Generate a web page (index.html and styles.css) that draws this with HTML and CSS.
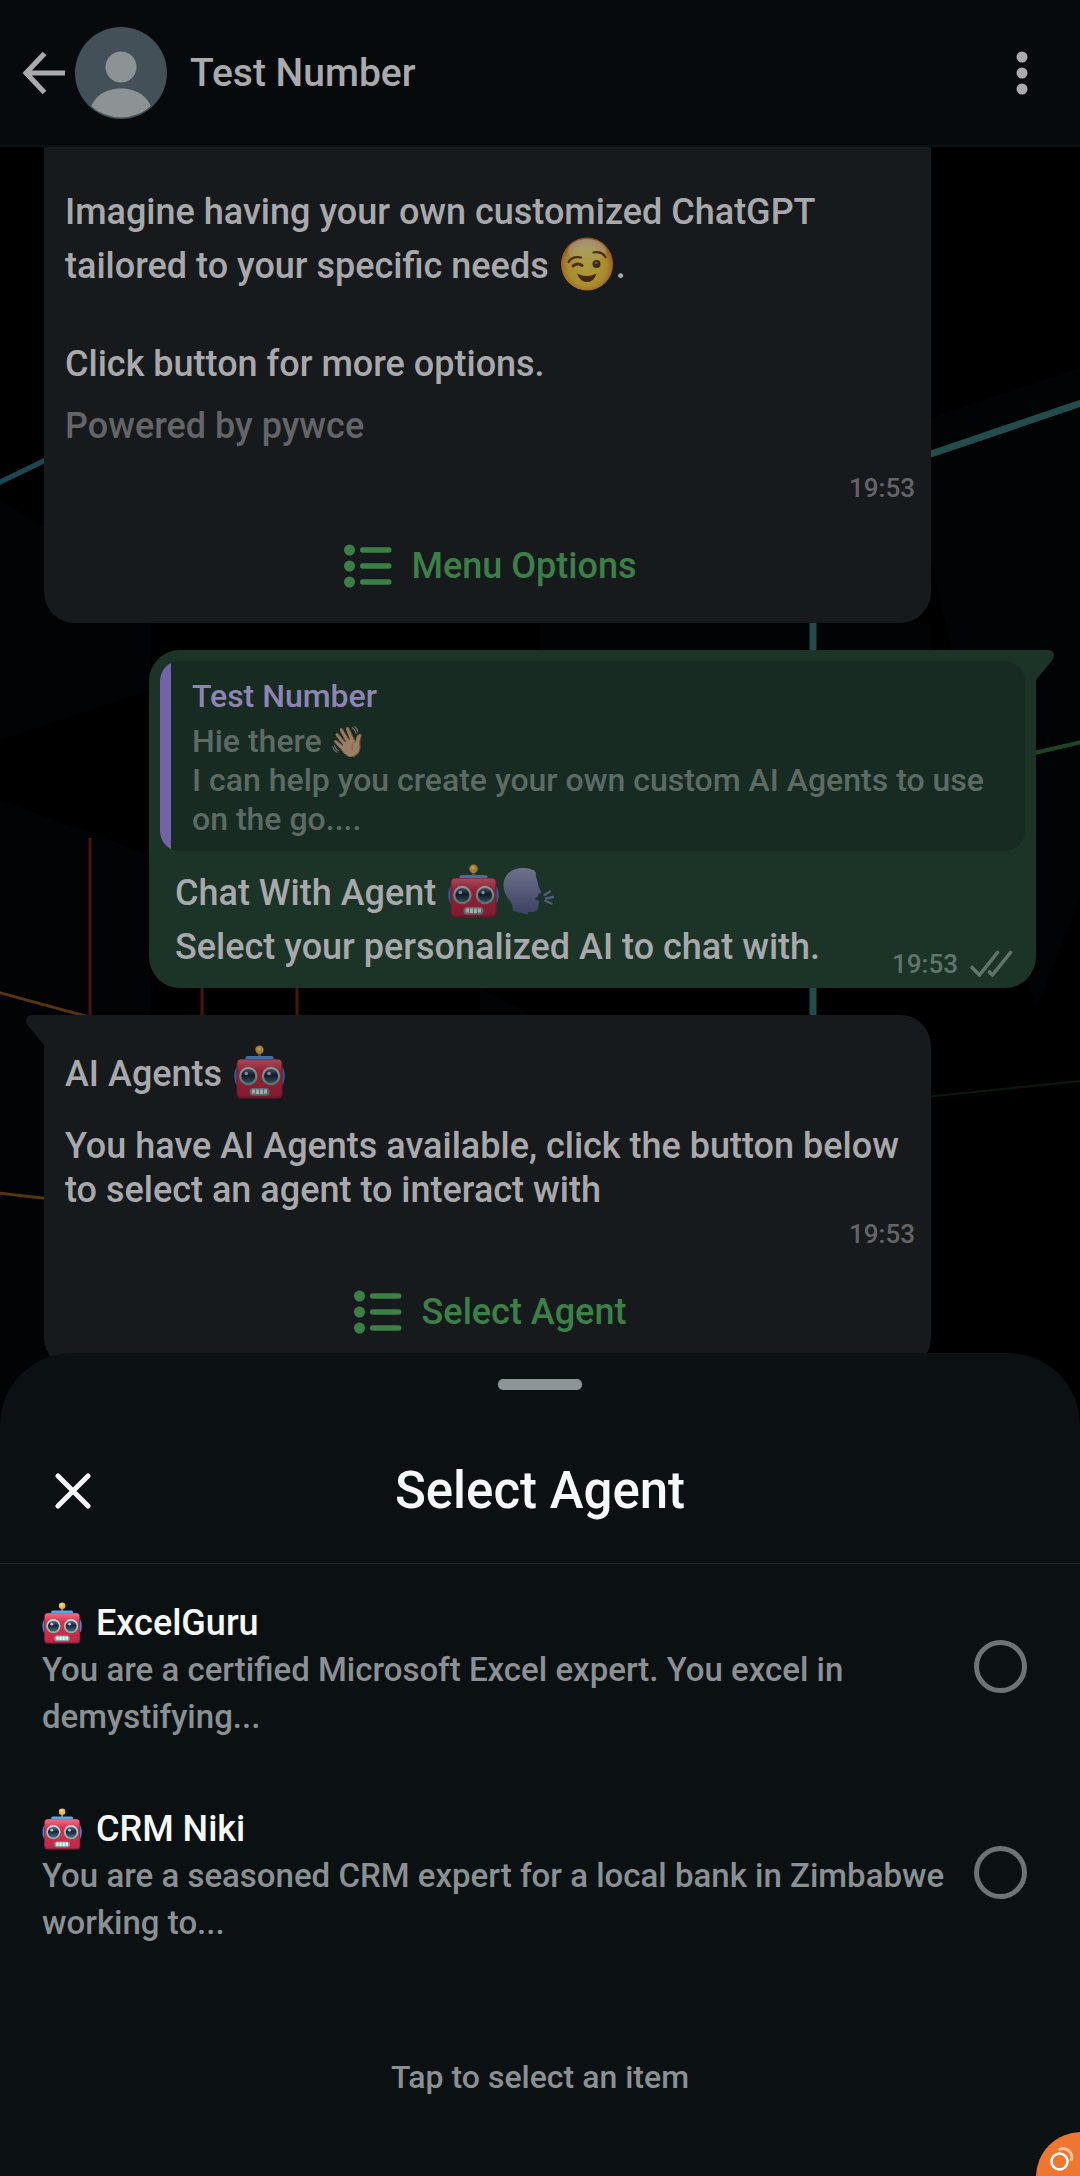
FILE: index.html
```html
<!DOCTYPE html>
<html lang="en">
<head>
<meta charset="utf-8">
<meta name="viewport" content="width=device-width, initial-scale=1">
<title>Test Number</title>
<link rel="stylesheet" href="styles.css">
</head>
<body>
<svg class="sprites" aria-hidden="true">
  <defs>
    <linearGradient id="robot-face" x1="0" y1="0" x2="0" y2="1">
      <stop offset="0" stop-color="#ee6f86"/><stop offset=".3" stop-color="#d9334f"/><stop offset="1" stop-color="#c02746"/>
    </linearGradient>
    <linearGradient id="robot-lens" x1="0" y1="0" x2="0" y2="1">
      <stop offset="0" stop-color="#5b7290"/><stop offset=".45" stop-color="#182638"/><stop offset="1" stop-color="#4b6b80"/>
    </linearGradient>
    <linearGradient id="robot-rim" x1="0" y1="0" x2="0" y2="1">
      <stop offset="0" stop-color="#d5dedd"/><stop offset="1" stop-color="#6fb0a6"/>
    </linearGradient>
    <radialGradient id="wink-skin" cx=".5" cy=".55" r=".52">
      <stop offset="0" stop-color="#ffe552"/><stop offset=".7" stop-color="#f8cf45"/><stop offset=".92" stop-color="#eb9d38"/><stop offset="1" stop-color="#d17a27"/>
    </radialGradient>
    <linearGradient id="wink-shine" x1="0" y1="0" x2="0" y2="1">
      <stop offset="0" stop-color="#fff" stop-opacity=".6"/><stop offset="1" stop-color="#fff" stop-opacity="0.1"/>
    </linearGradient>
    <linearGradient id="head-tone" x1="0" y1="0" x2="0" y2="1">
      <stop offset="0" stop-color="#a1a8c8"/><stop offset="1" stop-color="#565d94"/>
    </linearGradient>
    <filter id="glow" x="-20%" y="-20%" width="140%" height="140%" filterUnits="userSpaceOnUse"><feGaussianBlur stdDeviation="2"/></filter>
  </defs>
  <symbol id="robot" viewBox="0 0 52 54">
    <ellipse cx="3.5" cy="31" rx="3.2" ry="9" fill="#4a86e0"/>
    <ellipse cx="47.5" cy="31" rx="3.2" ry="9" fill="#4a86e0"/>
    <path d="M24.3 7h2.4v6h-2.4z" fill="#b1743a"/>
    <circle cx="25.5" cy="4.8" r="4.2" fill="#f0b93c"/>
    <circle cx="25" cy="3.8" r="1.8" fill="#ffe494"/>
    <rect x="11.500" y="11" width="28" height="5" rx="2" fill="#5aa7e8"/>
    <rect x="2.500" y="14" width="46" height="39.500" rx="4.500" fill="#a01f3c"/>
    <rect x="3.500" y="14.500" width="44" height="37" rx="4" fill="url(#robot-face)"/>
    <g>
      <circle cx="14.300" cy="31" r="9.200" fill="url(#robot-rim)"/>
      <circle cx="14.300" cy="31" r="7" fill="url(#robot-lens)"/>
      <circle cx="12.300" cy="28.500" r="1.800" fill="#b9cbe0"/>
      <circle cx="37" cy="31" r="9.200" fill="url(#robot-rim)"/>
      <circle cx="37" cy="31" r="7" fill="url(#robot-lens)"/>
      <circle cx="35" cy="28.500" r="1.800" fill="#b9cbe0"/>
    </g>
    <rect x="15.500" y="43" width="20" height="7.500" rx="3.500" fill="#7fa3a5"/>
    <path d="M18 44.500h3v4h-3zM22 44.500h3v4.500h-3zM26 44.500h3v4.500h-3zM30 44.500h3v4h-3z" fill="#f5f5f0"/>
  </symbol>
  <symbol id="list" viewBox="0 0 48 44">
    <circle cx="5.500" cy="6" r="5.500"/><circle cx="5.500" cy="22" r="5.500"/><circle cx="5.500" cy="38" r="5.500"/>
    <rect x="16" y="3.300" width="31.500" height="5.400" rx="2.700"/><rect x="16" y="19.300" width="31.500" height="5.400" rx="2.700"/><rect x="16" y="35.300" width="31.500" height="5.400" rx="2.700"/>
  </symbol>
</svg>

<div class="screen">
  <svg class="wallpaper" viewBox="0 0 1080 2176" preserveAspectRatio="xMidYMin slice" aria-hidden="true">
    <path d="M931 418L1080 368V900L1036 1010L931 560ZM0 500L150 590V690L0 740ZM0 800L150 855V1400H0Z" fill="#010305"/>
    <path d="M540 624H931V650H540ZM480 988L530 1015H480Z" fill="#010305"/>
    <g fill="none" stroke-width="9" filter="url(#glow)" opacity=".6">
      <path d="M-10 491L60 455" stroke="#0d3052"/>
      <path d="M925 456L1090 400M813 610V1020" stroke="#1b4746"/>
      <path d="M1030 754L1090 740" stroke="#123414" stroke-width="7"/>
      <path d="M90 838V1020M202 980V1020M297 980V1020" stroke="#3a0d06" stroke-width="6"/>
      <path d="M-10 990L100 1020M-10 1192L60 1200" stroke="#4a2a0a" stroke-width="7"/>
    </g>
    <g fill="none" stroke-width="5">
      <path d="M-10 487L60 453" stroke="#1c4752"/>
      <path d="M925 456L1090 400M813 610V1020" stroke="#234d4c" stroke-width="7"/>
      <path d="M1030 754L1090 740" stroke="#1f4325" stroke-width="4"/>
      <path d="M90 838V1020M202 980V1020M297 980V1020" stroke="#4a150c" stroke-width="3"/>
      <path d="M-10 990L100 1020M-10 1192L60 1200" stroke="#57350f" stroke-width="3"/>
      <path d="M925 1097L1090 1080" stroke="#081a0e" stroke-width="2"/>
    </g>
  </svg>

  <header class="topbar">
    <button class="icon-button" type="button" aria-label="Back">
      <svg width="42" height="44" viewBox="0 0 42 44"><path d="M21.500 2.500L3 22L21.500 41.500M3 22H42" fill="none" stroke="#aaaaac" stroke-width="5.200"/></svg>
    </button>
    <svg class="avatar" viewBox="0 0 92 92" role="img" aria-label="Contact photo">
      <clipPath id="avatar-clip"><circle cx="46" cy="46" r="44.500"/></clipPath>
      <circle cx="46" cy="46" r="46" fill="#445058"/>
      <circle cx="46" cy="40" r="15.500" fill="#8d9295"/>
      <path d="M14 92C14 72 28 61.500 46 61.500S78 72 78 92Z" fill="#8d9295" clip-path="url(#avatar-clip)"/>
    </svg>
    <h1 class="contact">Test Number</h1>
    <button class="icon-button" type="button" aria-label="More options">
      <svg width="12" height="44" viewBox="0 0 12 44" fill="#aaaaac"><circle cx="6" cy="6" r="5.500"/><circle cx="6" cy="22" r="5.500"/><circle cx="6" cy="38" r="5.500"/></svg>
    </button>
  </header>

  <main class="chat">
    <article class="bubble bubble-cut">
      <p class="text text-loose">Imagine having your own customized ChatGPT tailored to your specific needs <svg class="emoji dim" viewBox="0 0 52 54" role="img" aria-label="Winking face">
        <ellipse cx="26" cy="27" rx="26" ry="26.500" fill="url(#wink-skin)"/>
        <ellipse cx="26" cy="14" rx="19" ry="12" fill="url(#wink-shine)"/>
        <g fill="none" stroke="#6d4413" stroke-width="2.200" stroke-linecap="round">
          <path d="M7.500 25C10 21 15 19.500 20 20.500M32.500 15.500C38 14.500 42 16 44.500 20"/>
          <path d="M12 29C14.500 26.500 18.500 26.500 21 28.500" stroke-width="3"/>
        </g>
        <circle cx="35.500" cy="27" r="4" fill="#5a3a14"/><circle cx="35.200" cy="25.800" r="1.400" fill="#b58c3c"/>
        <path d="M16 36.500Q26 41.500 35.500 36.500Q33 45 26 45Q19 45 16 36.500Z" fill="#5c3b10"/>
      </svg>.</p>
      <p class="text after-blank">Click button for more options.</p>
      <p class="text footer-note">Powered by pywce</p>
      <time class="time" datetime="19:53">19:53</time>
      <button class="list-button" type="button"><svg class="list-icon"><use href="#list"/></svg>Menu Options</button>
    </article>

    <article class="bubble bubble-out">
      <svg class="tail tail-right" viewBox="0 0 19 30" aria-hidden="true"><path d="M0 0H14Q19 1 19 5.500Q19 8 17 10.500L1 30H0Z" fill="#1c3328"/></svg>
      <blockquote class="quote">
        <p class="quote-name">Test Number</p>
        <p class="quote-text">Hie there <span class="wave dim">👋🏼</span><br>I can help you create your own custom AI Agents to use on the go....</p>
      </blockquote>
      <div class="reply">
        <p class="text text-loose">Chat With Agent <svg class="emoji dim" role="img" aria-label="Robot"><use href="#robot"/></svg><svg class="emoji emoji-head dim" viewBox="0 0 52 48" role="img" aria-label="Speaking head">
          <path d="M19 0C27 0 32 2 33 5C32 8 34 11 35 15C35 18 36 20 38 23.500C38.500 25 37 25.500 35 26.500C36 29 32 30 31.500 31C33 32 36 32 36 34C35 37 36 41 33 43C30 45 27 43 25 44.500V47L9.500 42.500C11 38 8 34 4 29C-3 18 0 1 19 0Z" fill="url(#head-tone)"/>
          <path d="M41.500 27L47 23.500M43 30.500L50 29M42.500 33L48.500 35.500" fill="none" stroke="#7b83b4" stroke-width="2.400" stroke-linecap="round"/>
        </svg><br>Select your personalized AI to chat with.</p>
        <p class="meta"><time class="time" datetime="19:53">19:53</time><svg width="43" height="28" viewBox="0 0 43 28" role="img" aria-label="Delivered"><path d="M2 17.500L9.500 25L27.500 2.500M19.500 22L22.500 25L40.500 2.500" fill="none" stroke="#63756b" stroke-width="3.600" stroke-linecap="round" stroke-linejoin="round"/></svg></p>
      </div>
    </article>

    <article class="bubble bubble-in">
      <svg class="tail tail-left" viewBox="0 0 19 30" aria-hidden="true"><path d="M19 0H5Q0 1 0 5.500Q0 8 2 10.500L18 30H19Z" fill="#171a1d"/></svg>
      <p class="text text-loose">AI Agents <svg class="emoji dim" role="img" aria-label="Robot"><use href="#robot"/></svg></p>
      <p class="text after-title">You have AI Agents available, click the button below to select an agent to interact with</p>
      <time class="time time-close" datetime="19:53">19:53</time>
      <button class="list-button" type="button"><svg class="list-icon"><use href="#list"/></svg>Select Agent</button>
    </article>
  </main>

  <section class="sheet" role="dialog" aria-labelledby="sheet-title">
    <div class="handle"></div>
    <div class="sheet-head">
      <button class="icon-button" type="button" aria-label="Close">
        <svg width="36" height="36" viewBox="0 0 36 36"><path d="M3 3L33 33M33 3L3 33" stroke="#f7f8fa" stroke-width="5" stroke-linecap="round"/></svg>
      </button>
      <h2 class="sheet-title" id="sheet-title">Select Agent</h2>
    </div>
    <div class="options">
      <label class="option">
        <span class="option-body">
          <span class="option-name"><svg class="option-emoji" role="img" aria-label="Robot"><use href="#robot"/></svg>ExcelGuru</span>
          <span class="option-text">You are a certified Microsoft Excel expert. You excel in demystifying...</span>
        </span>
        <input class="radio" type="radio" name="agent">
      </label>
      <label class="option">
        <span class="option-body">
          <span class="option-name"><svg class="option-emoji" role="img" aria-label="Robot"><use href="#robot"/></svg>CRM Niki</span>
          <span class="option-text">You are a seasoned CRM expert for a local bank in Zimbabwe working to...</span>
        </span>
        <input class="radio" type="radio" name="agent">
      </label>
    </div>
    <p class="hint">Tap to select an item</p>
  </section>

  <button class="fab" type="button" aria-label="Capture">
    <svg width="90" height="90" viewBox="0 0 90 90" fill="none"><path d="M22.500 18A8.700 8.700 0 0 1 35 29" stroke="#f9c49a" stroke-width="3"/><circle cx="23.500" cy="29.500" r="8" stroke="#fff" stroke-width="2.600"/></svg>
  </button>
</div>
</body>
</html>
```
FILE: styles.css
```css
* { box-sizing: border-box; }

body {
  margin: 0;
  background: #000;
  font-family: Roboto, "Noto Sans", sans-serif;
  font-weight: 500;
  font-size: 36px;
  line-height: 44px;
}

p, h1, h2, blockquote { margin: 0; font-weight: 500; }

button {
  margin: 0;
  padding: 0;
  border: 0;
  background: none;
  font: inherit;
  color: inherit;
  cursor: pointer;
}

.sprites { position: absolute; width: 0; height: 0; }

.screen {
  position: relative;
  display: flex;
  flex-direction: column;
  min-height: 100vh;
  overflow: hidden;
}

.wallpaper {
  position: absolute;
  inset: 0;
  width: 100%;
  height: 100%;
}

/* Top bar */
.topbar {
  position: relative;
  display: flex;
  align-items: center;
  height: 147px;
  padding: 0 52px 0 23px;
  background: #060a0d;
  border-bottom: 2px solid #0d1113;
}

.icon-button { display: flex; }
.icon-button svg { display: block; }
.avatar { width: 92px; height: 92px; margin-left: 10px; }

.contact {
  flex: 1;
  margin-left: 23px;
  font-size: 39px;
  color: #aaaaac;
}

/* Messages */
.chat {
  position: relative;
  display: flex;
  flex-direction: column;
  gap: 27px;
  padding: 0 44px;
}

.bubble {
  position: relative;
  display: flex;
  flex-direction: column;
  width: calc(100% - 105px);
  padding: 32px 16px 35px 21px;
  border-radius: 31px;
  background: #171a1d;
  color: #a9a9ab;
}

.bubble-cut { padding-top: 38px; border-radius: 0 0 31px 31px; }
.bubble-in { border-top-left-radius: 0; }

.bubble-out {
  align-self: flex-end;
  padding: 11px 11px 8px;
  border-top-right-radius: 0;
  background: #1c3328;
}

.tail { position: absolute; top: 0; width: 19px; height: 30px; }
.tail-right { right: -18px; }
.tail-left { left: -18px; }

.text-loose { line-height: 54px; }
.after-blank { margin-top: 49px; }
.after-title { margin-top: 23px; }
.footer-note { margin-top: 18px; color: #646567; }

.emoji {
  width: 52px;
  height: 54px;
  margin: -8px 3px;
  vertical-align: -5px;
}

.emoji-head { height: 48px; margin: -8px 0; vertical-align: -3px; }
.dim { filter: brightness(0.68); }

.time {
  align-self: flex-end;
  margin-top: 24px;
  font-size: 26px;
  line-height: 32px;
  color: #646567;
}

.time-close { margin-top: 6px; }

.list-button {
  display: flex;
  align-items: center;
  justify-content: center;
  gap: 20px;
  margin-top: 40px;
  color: #3d8047;
}

.list-icon { width: 48px; height: 44px; fill: #3d8047; }

.quote {
  padding: 15px 22px 12px 32px;
  border-radius: 20px;
  background: linear-gradient(to right, #7063a8 11px, #182b23 11px);
  font-size: 32px;
}

.quote-name { line-height: 40px; color: #8f85b4; }
.quote-text { margin-top: 6px; line-height: 39px; color: #5d6b64; }

.wave {
  display: inline-block;
  font-family: "Noto Color Emoji", sans-serif;
  font-size: 30px;
  line-height: 32px;
}

.reply {
  display: flex;
  align-items: flex-end;
  justify-content: space-between;
  padding: 15px 12px 0 15px;
}

.reply .text { padding-bottom: 6px; }
.meta { display: flex; align-items: center; gap: 12px; }
.meta .time { margin: 0; color: #63756b; }

/* Bottom sheet */
.sheet {
  position: absolute;
  right: 0;
  bottom: 0;
  left: 0;
  padding: 26px 0 79px;
  border-radius: 72px 72px 0 0;
  background: #0b1013;
}

.handle {
  width: 84px;
  height: 11px;
  margin: 0 auto;
  border-radius: 5px;
  background: #8d9598;
}

.sheet-head {
  display: grid;
  grid-template-columns: 36px 1fr 36px;
  align-items: center;
  padding: 71px 55px 42px;
  border-bottom: 1px solid #23272a;
}

.sheet-title {
  font-size: 51px;
  line-height: 60px;
  text-align: center;
  color: #f7f8fa;
}

.options {
  display: flex;
  flex-direction: column;
  gap: 67px;
  padding: 37px 53px 0 42px;
}

.option {
  display: flex;
  align-items: flex-start;
  justify-content: space-between;
  gap: 22px;
  cursor: pointer;
}

.option-body { display: flex; flex-direction: column; gap: 1px; }
.option-name { display: flex; align-items: center; gap: 13px; color: #f7f8fa; }
.option-emoji { width: 41px; height: 42px; }
.option-text { font-size: 33px; line-height: 47px; color: #8b9093; }

.radio {
  flex: none;
  width: 53px;
  height: 53px;
  margin: 39px 0 0;
  border: 5px solid #6e7376;
  border-radius: 50%;
  appearance: none;
  cursor: pointer;
}

.radio:checked { background: radial-gradient(#21c063 50%, transparent 55%); }

.hint {
  margin-top: 111px;
  font-size: 32px;
  line-height: 40px;
  text-align: center;
  color: #8b9093;
}

/* Floating shortcut, half off the corner of the screen */
.fab {
  position: absolute;
  right: -46px;
  bottom: -46px;
  width: 90px;
  height: 90px;
  border-radius: 50%;
  background: #ef7630;
}

.fab svg { display: block; }
```
